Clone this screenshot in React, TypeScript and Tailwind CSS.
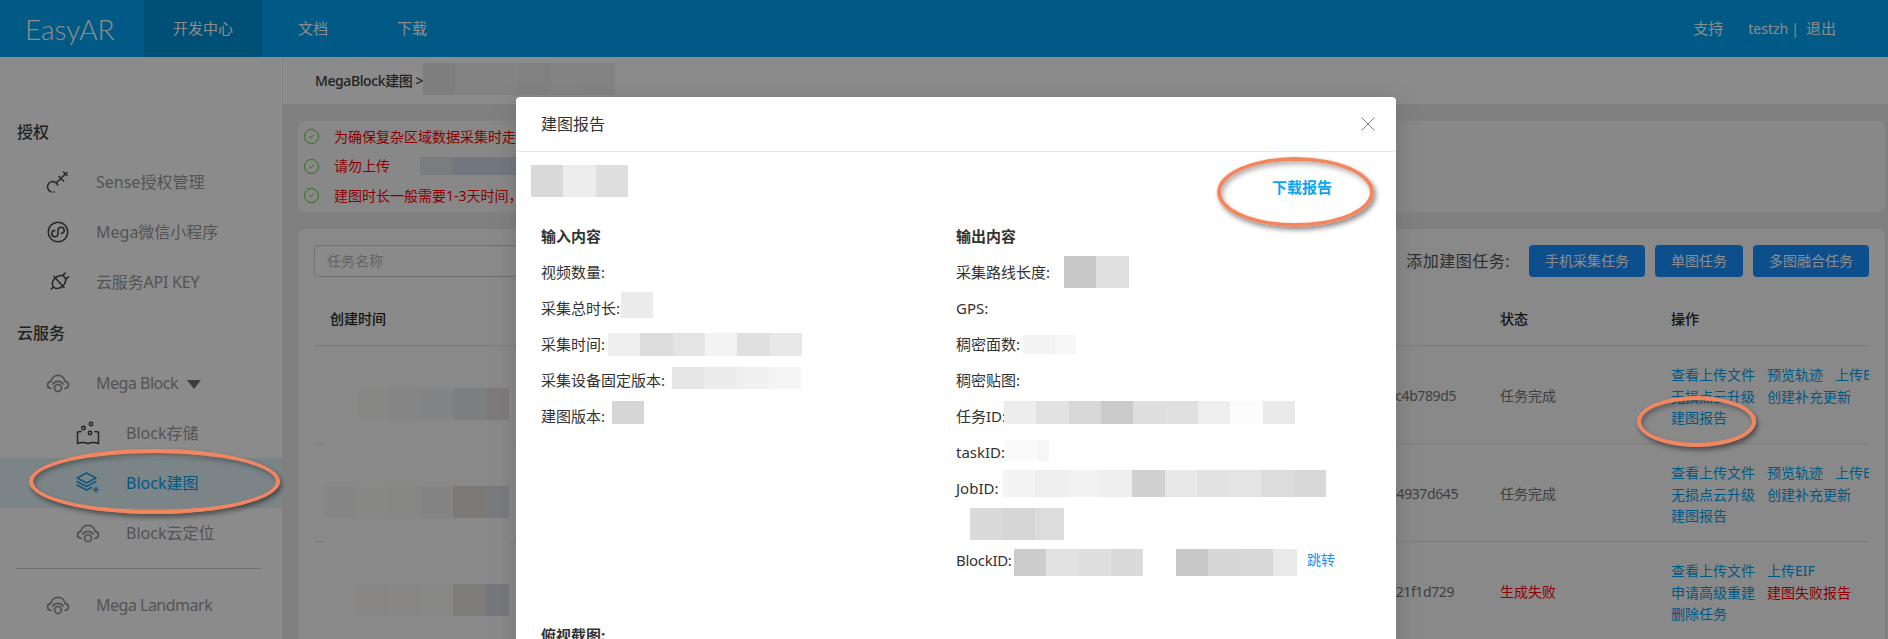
import { CircleCheck, X } from "lucide-react";

type Cells = string[];

function Mosaic({ cells, className = "" }: { cells: Cells; className?: string }) {
  return (
    <div className={`flex shrink-0 ${className}`}>
      {cells.map((c, i) => (
        <div key={i} className={c} />
      ))}
    </div>
  );
}

const stroke = { fill: "none", strokeWidth: 1.5, strokeLinecap: "round", strokeLinejoin: "round" } as const;

function KeyIcon() {
  return (
    <svg width="24" height="24" viewBox="0 0 24 24" stroke="#444" {...stroke}>
      <path d="M5 21.800A5.300 5.300 0 1 1 11.800 15" />
      <path d="M10.500 12.500 21 2.500M13 6.500l4.500 4.500M17.500 2l3.500 3.500" />
      <path d="M7.500 22h.5" />
    </svg>
  );
}

function MiniIcon() {
  return (
    <svg width="22" height="22" viewBox="0 0 22 22" stroke="#444" {...stroke} className="ml-[1px]">
      <circle cx="11" cy="11" r="9.800" />
      <path d="M7.800 9.500a3.100 3.100 0 1 0 3.200 3.200V9.300a3.100 3.100 0 1 1 3.200 3.200" />
    </svg>
  );
}

function PlugIcon() {
  return (
    <svg width="22" height="22" viewBox="0 0 22 22" stroke="#444" {...stroke} className="ml-[2px]">
      <g transform="rotate(-42 11 11)">
        <ellipse cx="11" cy="11" rx="7.500" ry="5.500" />
        <path d="M11 3.500v15M.5 11h3M18.500 8.500h3M18.500 13.500h3" />
      </g>
    </svg>
  );
}

function CloudIcon({ color = "#8f8f8f" }: { color?: string }) {
  return (
    <svg width="24" height="20" viewBox="0 0 24 20" stroke={color} {...stroke} strokeWidth={1.7}>
      <path d="M5 15.500C.6 15 .2 9.200 5 8.300 6 .4 18 .4 19 8.300c4.800.9 4.400 6.700 0 7.200" />
      <path d="M7 11a6 6 0 0 1 10 0" />
      <circle cx="12" cy="15" r="3.500" />
    </svg>
  );
}

function MapIcon() {
  return (
    <svg width="24" height="24" viewBox="0 0 24 24" stroke="#444" {...stroke}>
      <path d="M5 10.500 1.500 11v11.500c4-1.500 7-1.500 10.500 0 3.500-1.500 6.500-1.500 10.500 0V11L19 10.500" />
      <circle cx="7.500" cy="7" r="1.700" />
      <circle cx="15" cy="3" r="1.700" />
      <circle cx="14" cy="12" r="1.700" />
    </svg>
  );
}

function LayersIcon() {
  return (
    <svg width="24" height="22" viewBox="0 0 24 22" stroke="#1aa0e6" {...stroke}>
      <path d="M10.500 1 20 6l-9.500 5L1 6z" />
      <path d="M1 9.500l9.500 5 9.500-5M1 13l9.500 5 5-2.500" />
      <path d="M20 15v5M17.500 17.500h5" />
    </svg>
  );
}

function SideItem({
  icon,
  label,
  sub = false,
  active = false,
  labelClass = "",
  extra,
}: {
  icon: React.ReactNode;
  label: string;
  sub?: boolean;
  active?: boolean;
  labelClass?: string;
  extra?: React.ReactNode;
}) {
  return (
    <div
      className={`flex h-[50px] items-center text-base ${sub ? "pl-[76px]" : "pl-[46px]"} ${
        active ? "bg-[#e0f2f8] text-[#00a3f2]" : "text-[#999999]"
      }`}
    >
      <div className="flex w-[50px] shrink-0 items-center">{icon}</div>
      <span className={`whitespace-nowrap ${labelClass}`}>{label}</span>
      {extra}
    </div>
  );
}

function Sidebar() {
  return (
    <aside className="w-[283px] shrink-0 border-r border-[#ececec] bg-[#fdfdfd] pt-[50px]">
      <h3 className="flex h-[50px] items-center pl-[17px] text-base font-medium text-[#3e3e3e]">授权</h3>
      <SideItem icon={<KeyIcon />} label="Sense授权管理" />
      <SideItem icon={<MiniIcon />} label="Mega微信小程序" />
      <SideItem icon={<PlugIcon />} label="云服务API KEY" labelClass="tracking-[-0.2px]" />
      <h3 className="flex h-[51px] items-center pl-[17px] text-base font-medium text-[#3e3e3e]">云服务</h3>
      <SideItem
        icon={<CloudIcon />}
        label="Mega Block"
        labelClass="tracking-[-0.5px]"
        extra={
          <svg width="14" height="9" viewBox="0 0 14 9" className="ml-[9px] mt-[2px]">
            <polygon points="0,0 14,0 7,9" fill="#707070" />
          </svg>
        }
      />
      <SideItem sub icon={<MapIcon />} label="Block存储" />
      <SideItem sub active icon={<LayersIcon />} label="Block建图" />
      <SideItem sub icon={<CloudIcon />} label="Block云定位" />
      <div className="ml-4 mt-[10px] h-px w-[246px] bg-[#d0d0d0]" />
      <div className="mt-[11px]">
        <SideItem icon={<CloudIcon />} label="Mega Landmark" labelClass="tracking-[-0.5px]" />
      </div>
    </aside>
  );
}

const rowBlur: Cells[] = [
  ["w-8 h-8", "w-8 h-8 bg-[#f6f6f4]", "w-8 h-8 bg-[#f2f2f4]", "w-8 h-8 bg-[#eff0f3]", "w-8 h-8 bg-[#e5e7ec]", "w-6 h-8 bg-[#e4e0e0]"],
  ["w-8 h-8 bg-[#f2f2f2]", "w-8 h-8 bg-[#f6f6f4]", "w-8 h-8 bg-[#f4f4f2]", "w-8 h-8 bg-[#f0f1f3]", "w-8 h-8 bg-[#e4dcd8]", "w-6 h-8 bg-[#dfe1e8]"],
  ["w-8 h-8", "w-8 h-8 bg-[#f6f5f2]", "w-8 h-8 bg-[#f7f6f3]", "w-8 h-8 bg-[#f7f7f5]", "w-8 h-8 bg-[#e6e3de]", "w-6 h-8 bg-[#d8dae4]"],
];

const taskRows = [
  {
    idPad: "pr-[28px]",
    id: "9d1fa02c4b789d5",
    status: "任务完成",
    failed: false,
    lines: [
      ["查看上传文件", "预览轨迹", "上传EIF"],
      ["无损点云升级", "创建补充更新"],
      ["建图报告"],
    ],
  },
  {
    idPad: "pr-[26px]",
    id: "3e70b6154937d645",
    status: "任务完成",
    failed: false,
    lines: [
      ["查看上传文件", "预览轨迹", "上传EIF"],
      ["无损点云升级", "创建补充更新"],
      ["建图报告"],
    ],
  },
  {
    idPad: "pr-[30px]",
    id: "c08e4a7721f1d729",
    status: "生成失败",
    failed: true,
    lines: [["查看上传文件", "上传EIF"], ["申请高级重建", "建图失败报告"], ["删除任务"]],
  },
];

function TaskTable() {
  return (
    <div className="text-sm">
      <div className="flex h-[53px] items-center border-b border-[#e2e2e2] bg-[#f9f9f9] font-medium text-[#262626]">
        <div className="flex-1 pl-4">创建时间</div>
        <div className="w-[171px] pl-4">状态</div>
        <div className="w-[214px] pl-4">操作</div>
      </div>
      {taskRows.map((row, rowIndex) => (
        <div key={row.id} className="flex h-[98px] items-stretch text-[#757575]">
          <div className="w-[11px] border-b border-[#e2e2e2]" />
          <div className="flex w-[185px] items-center pt-[18px]">
            <Mosaic cells={rowBlur[rowIndex]} />
          </div>
          <div className={`flex flex-1 items-center justify-end border-b border-[#e2e2e2] pt-[3px] tracking-[-0.4px] ${row.idPad}`}>
            {row.id}
          </div>
          <div className={`flex w-[171px] items-center border-b border-[#e2e2e2] pl-4 pt-[3px] ${row.failed ? "text-[#ff0000]" : ""}`}>
            {row.status}
          </div>
          <div className="flex w-[214px] flex-col justify-center overflow-hidden border-b border-[#e2e2e2] pl-4 pt-[5px]">
            {row.lines.map((line, i) => (
              <div key={i} className="flex h-[21.500px] items-center gap-3 whitespace-nowrap">
                {line.map((a) => (
                  <a key={a} className={a === "建图失败报告" ? "text-[#ff0000]" : "text-[#00a3f2]"}>
                    {a}
                  </a>
                ))}
              </div>
            ))}
          </div>
        </div>
      ))}
    </div>
  );
}

function Page() {
  return (
    <div className="flex h-full flex-col">
      <header className="flex h-[57px] shrink-0 items-center bg-[#00a4f2] text-[15px] text-white">
        <div className="w-[144px] pl-[25px] font-['Lato',sans-serif] text-[28px] font-light">EasyAR</div>
        <nav className="flex h-full items-center">
          <a className="flex h-full w-[118px] items-center justify-center bg-[#0090d7]">开发中心</a>
          <a className="ml-[36px]">文档</a>
          <a className="ml-[69px]">下载</a>
        </nav>
        <div className="ml-auto flex items-center pr-[52px]">
          <a>支持</a>
          <span className="ml-[25px] text-sm">testzh</span>
          <span className="ml-[3px] text-sm">|</span>
          <a className="ml-[7px]">退出</a>
        </div>
      </header>
      <div className="flex min-h-0 flex-1">
        <Sidebar />
        <main className="min-w-0 flex-1 bg-[#e9e9e9]">
          <div className="flex h-[47px] items-center bg-[#fdfdfd] pl-[32px] text-sm text-[#3e3e3e]">
            <span className="font-medium tracking-[-0.4px]">MegaBlock建图 &gt;</span>
            <Mosaic
              className="mb-[3px]"
              cells={["w-8 h-8 bg-[#e6e6e6]", "w-8 h-8 bg-[#eeeeee]", "w-8 h-8 bg-[#eeeeee]", "w-8 h-8 bg-[#ececec]", "w-8 h-8 bg-[#f0f0f0]", "w-8 h-8 bg-[#eeeeee]"]}
            />
          </div>
          <div className="pl-[15px] pr-[3px] pt-[17px]">
            <section className="rounded-md bg-[#f7f7f7] px-[5px] py-px text-sm text-[#ff0000]">
              <div className="flex h-[29.500px] items-center gap-[14px]">
                <CircleCheck size={17} strokeWidth={1.3} className="text-[#52c41a]" />
                <span>为确保复杂区域数据采集时走向正确，请按照规范完成数据采集</span>
              </div>
              <div className="flex h-[29.500px] items-center gap-[14px]">
                <CircleCheck size={17} strokeWidth={1.3} className="text-[#52c41a]" />
                <span className="w-[72px]">请勿上传</span>
                <Mosaic cells={["w-8 h-[18px] bg-[#dce4e8]", "w-16 h-[18px] bg-[#cfdbe6]"]} />
              </div>
              <div className="flex h-[29.500px] items-center gap-[14px]">
                <CircleCheck size={17} strokeWidth={1.3} className="text-[#52c41a]" />
                <span>建图时长一般需要1-3天时间，请耐心等待</span>
              </div>
            </section>
            <section className="mt-[17px] rounded-md bg-[#f9f9f9] p-4">
              <div className="mb-4 flex h-8 items-center">
                <input
                  readOnly
                  placeholder="任务名称"
                  className="h-8 w-[300px] rounded border border-[#cccccc] bg-[#fbfbfb] px-3 text-sm placeholder:text-[#b5b5b5]"
                />
                <span className="ml-auto text-base tracking-[0.5px] text-[#555555]">添加建图任务:</span>
                <button className="ml-[19px] h-8 w-[116px] rounded bg-[#1890ff] text-sm text-white">手机采集任务</button>
                <button className="ml-[10px] h-8 w-[88px] rounded bg-[#1890ff] text-sm text-white">单图任务</button>
                <button className="ml-[10px] h-8 w-[116px] rounded bg-[#1890ff] text-sm text-white">多图融合任务</button>
              </div>
              <TaskTable />
            </section>
          </div>
        </main>
      </div>
    </div>
  );
}

function Row({ label, labelClass = "", children }: { label: string; labelClass?: string; children?: React.ReactNode }) {
  return (
    <div className="flex h-9 items-center whitespace-nowrap">
      <span className={`shrink-0 ${labelClass}`}>{label}</span>
      {children}
    </div>
  );
}

function ReportModal() {
  return (
    <div className="absolute left-[516px] top-[97px] w-[880px] rounded-t bg-white text-[15px] text-[#333333] shadow-[0_6px_16px_rgba(0,0,0,0.08),0_9px_28px_8px_rgba(0,0,0,0.05)]">
      <div className="flex h-[55px] items-center justify-between border-b border-[#e8e8e8] pl-[25px] pr-[16px]">
        <h2 className="text-base">建图报告</h2>
        <X size={24} strokeWidth={1} className="text-[#7a7a7a]" />
      </div>
      <div className="pt-[13px]">
        <div className="flex h-8 items-center justify-between pl-[15px] pr-[64px]">
          <Mosaic cells={["w-8 h-8 bg-[#d9d9d9]", "w-[33px] h-8 bg-[#ededed]", "w-8 h-8 bg-[#dedede]"]} />
          <a className="mt-[12px] font-bold text-[#0ea5ee]">下载报告</a>
        </div>
        <div className="mt-[21px] flex">
          <div className="w-[440px] pl-[25px]">
            <div className="flex h-9 items-center font-bold">输入内容</div>
            <Row label="视频数量:" />
            <Row label="采集总时长:" labelClass="w-[80px]">
              <Mosaic className="mb-[6px]" cells={["w-8 h-[26px] bg-[#ebebeb]"]} />
            </Row>
            <Row label="采集时间:" labelClass="w-[67px]">
              <Mosaic
                cells={[
                  "w-8 h-[23px] bg-[#eeeeee]",
                  "w-[33px] h-[23px] bg-[#dcdcdc]",
                  "w-8 h-[23px] bg-[#e4e4e4]",
                  "w-8 h-[23px] bg-[#f3f3f3]",
                  "w-[33px] h-[23px] bg-[#e0e0e0]",
                  "w-8 h-[23px] bg-[#e8e8e8]",
                ]}
              />
            </Row>
            <Row label="采集设备固定版本:" labelClass="w-[131px]">
              <Mosaic
                className="mb-[4px]"
                cells={["w-8 h-[22px] bg-[#e6e6e6]", "w-[33px] h-[22px] bg-[#ebebeb]", "w-8 h-[22px] bg-[#f0f0f0]", "w-8 h-[22px] bg-[#f5f5f5]"]}
              />
            </Row>
            <Row label="建图版本:" labelClass="w-[71px]">
              <Mosaic className="mb-[7px]" cells={["w-8 h-[23px] bg-[#d6d6d6]"]} />
            </Row>
          </div>
          <div className="flex-1">
            <div className="flex h-9 items-center font-bold">输出内容</div>
            <Row label="采集路线长度:" labelClass="w-[108px]">
              <Mosaic cells={["w-8 h-8 bg-[#c8c8c8]", "w-[33px] h-8 bg-[#e0e0e0]"]} />
            </Row>
            <Row label="GPS:" />
            <Row label="稠密面数:" labelClass="w-[67px]">
              <Mosaic cells={["w-8 h-[19px] bg-[#f3f3f3]", "w-[21px] h-[19px] bg-[#f7f7f7]"]} />
            </Row>
            <Row label="稠密贴图:" />
            <Row label="任务ID:" labelClass="w-[48px]">
              <Mosaic
                className="mb-[7px]"
                cells={[
                  "w-8 h-[23px] bg-[#ededed]",
                  "w-[33px] h-[23px] bg-[#e2e2e2]",
                  "w-8 h-[23px] bg-[#d8d8d8]",
                  "w-8 h-[23px] bg-[#cacaca]",
                  "w-[33px] h-[23px] bg-[#dedede]",
                  "w-8 h-[23px] bg-[#e0e0e0]",
                  "w-8 h-[23px] bg-[#eeeeee]",
                  "w-[33px] h-[23px] bg-[#fcfcfc]",
                  "w-8 h-[23px] bg-[#e9e9e9]",
                ]}
              />
            </Row>
            <Row label="taskID:" labelClass="w-[49px]">
              <Mosaic className="mb-[3px]" cells={["w-8 h-[21px] bg-[#fafafa]", "w-3 h-[21px] bg-[#f6f6f6]"]} />
            </Row>
            <Row label="JobID:" labelClass="w-[47px]">
              <Mosaic
                className="mb-[9px]"
                cells={[
                  "w-8 h-[27px] bg-[#f4f4f4]",
                  "w-[33px] h-[27px] bg-[#eeeeee]",
                  "w-8 h-[27px] bg-[#f2f2f2]",
                  "w-8 h-[27px] bg-[#eeeeee]",
                  "w-[33px] h-[27px] bg-[#d0d0d0]",
                  "w-8 h-[27px] bg-[#e8e8e8]",
                  "w-8 h-[27px] bg-[#e2e2e2]",
                  "w-8 h-[27px] bg-[#e4e4e4]",
                  "w-8 h-[27px] bg-[#dcdcdc]",
                  "w-[33px] h-[27px] bg-[#d8d8d8]",
                ]}
              />
            </Row>
            <Row label="" labelClass="w-[14px]">
              <Mosaic cells={["w-[33px] h-8 bg-[#dadada]", "w-8 h-8 bg-[#d6d6d6]", "w-[29px] h-8 bg-[#dcdcdc]"]} />
            </Row>
            <Row label="BlockID:" labelClass="w-[58px] tracking-[-0.3px]">
              <Mosaic
                className="mt-[5px]"
                cells={["w-8 h-[27px] bg-[#cccccc]", "w-[33px] h-[27px] bg-[#e2e2e2]", "w-8 h-[27px] bg-[#dfdfdf]", "w-8 h-[27px] bg-[#dadada]"]}
              />
              <Mosaic
                className="ml-[33px] mt-[5px]"
                cells={["w-8 h-[27px] bg-[#c8c8c8]", "w-8 h-[27px] bg-[#d6d6d6]", "w-[33px] h-[27px] bg-[#d8d8d8]", "w-6 h-[27px] bg-[#e9e9e9]"]}
              />
              <a className="ml-[10px] text-sm text-[#1890ff]">跳转</a>
            </Row>
          </div>
        </div>
        <div className="mt-[39px] flex h-9 items-center pl-[25px] font-bold">俯视截图:</div>
      </div>
    </div>
  );
}

const ringClass =
  "pointer-events-none absolute rounded-[50%] border-4 border-[#f4865f] shadow-[2px_3px_5px_rgba(0,0,0,0.45),inset_2px_3px_5px_rgba(0,0,0,0.3)]";

export default function App() {
  return (
    <div className="relative h-[639px] w-[1888px] overflow-hidden font-['Noto_Sans','Noto_Sans_CJK_SC',sans-serif]">
      <Page />
      <div className="absolute inset-0 bg-black/45" />
      <ReportModal />
      <div className={`${ringClass} left-[29px] top-[449px] h-[65px] w-[251px]`} />
      <div className={`${ringClass} left-[1217px] top-[157px] h-[70px] w-[157px]`} />
      <div className={`${ringClass} left-[1637px] top-[396px] h-[51px] w-[119px]`} />
    </div>
  );
}
